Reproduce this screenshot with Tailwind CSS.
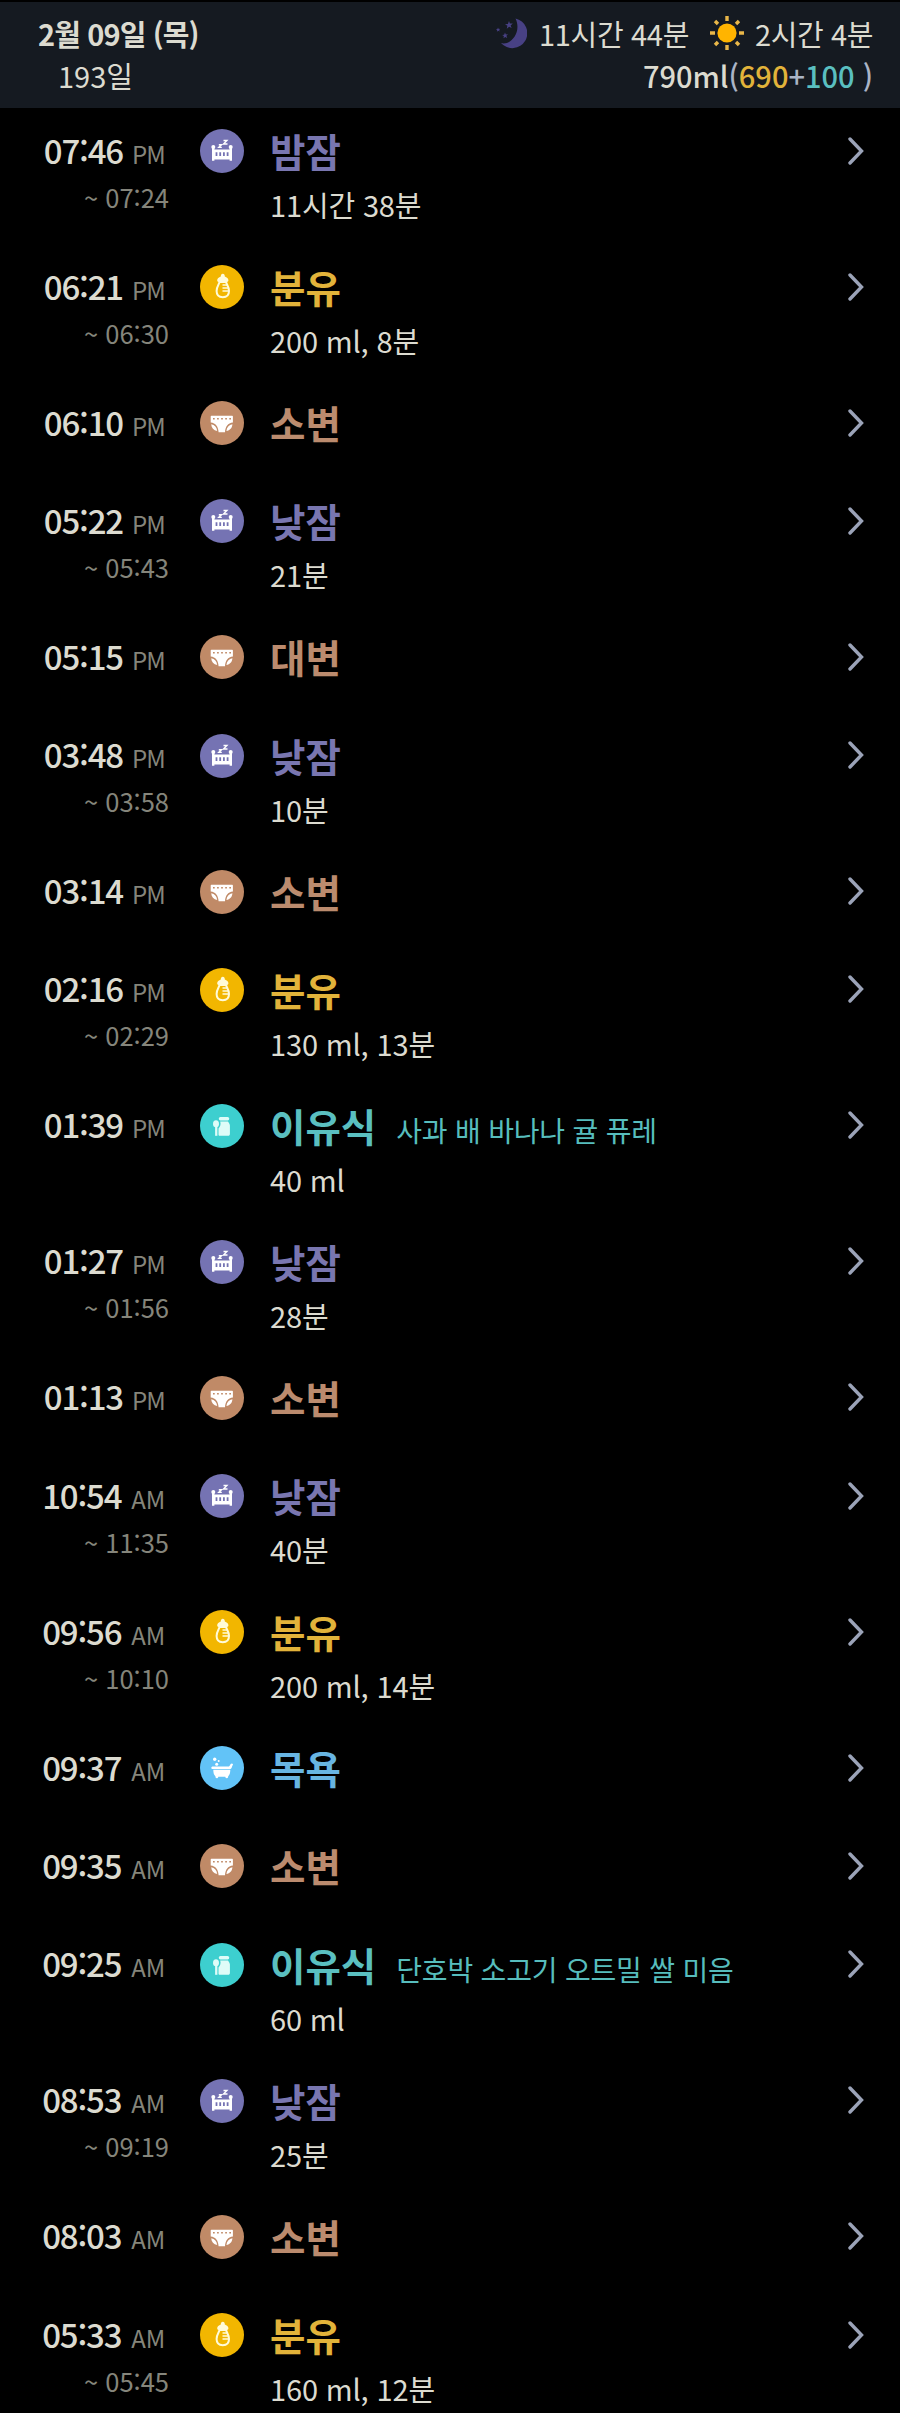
<!DOCTYPE html>
<html lang="ko">
<head>
    <meta charset="UTF-8">
    <meta name="viewport" content="width=device-width, initial-scale=1.0">
    <title>육아 기록</title>
    <script src="https://cdn.jsdelivr.net/npm/@tailwindcss/browser@4"></script>
</head>
<body class="bg-black text-[#dcdbd0] font-['Noto_Sans_CJK_KR',sans-serif] w-[900px] h-[2413px] overflow-hidden">
    <header class="mt-0.5 h-[106px] bg-[#151a21] flex justify-between pt-[10px] pl-[38px] pr-[27px] text-[29px] leading-[42px]">
        <div>
            <div class="font-bold tracking-[-0.9px] whitespace-nowrap">2월 09일 (목)</div>
            <div class="pl-5">193일</div>
        </div>
        <div class="flex flex-col items-end">
            <div class="flex items-center whitespace-nowrap">
                <svg class="w-8 h-8 mr-3" viewBox="0 0 32 32" fill="#484184">
                    <path d="M20.5 1.5A15 15 0 1 1 6 26C16 29 27 15 20.5 1.5Z"/>
                    <path d="M14 4l.9 2.6 2.9-.2-2.2 2 1.1 2.7-2.6-1.3-2.3 1.9.6-2.9-2.4-1.6 2.9-.3zM3 10.500l.7 1.400 1.600-.1-1.200 1.200.6 1.500-1.500-.8-1.300 1.100.3-1.700-1.400-.9 1.600-.2zM10 15.500l.8 2 2.200-.2-1.600 1.500.8 2.100-2-1-1.700 1.400.4-2.200-1.800-1.200 2.100-.2z"/>
                </svg>
                <span class="tracking-[-0.3px]">11시간 44분</span>
                <svg class="w-9 h-9 ml-5 mr-[10px]" viewBox="0 0 36 36">
                    <circle cx="18" cy="18" r="9.600" fill="#ffb400"/>
                    <path d="M18 1v5M18 30v5M1 18h5M30 18h5M6 6l3 3M27 27l3 3M30 6l-3 3M9 27l-3 3" stroke="#e9b749" stroke-width="3.400"/>
                </svg>
                <span class="tracking-[-0.4px]">2시간 4분</span>
            </div>
            <div class="font-medium whitespace-pre">790ml<span class="text-[#aab4c6]">(</span><span class="text-[#e2b33a]">690</span><span class="text-[#aab4c6]">+</span><span class="text-[#5abfc0]">100</span><span class="text-[#aab4c6]"> )</span></div>
        </div>
    </header>

    <main id="log-list"></main>

    <script>
        // Icon artwork, drawn in a 44x44 circle
        const icons = {
            crib: '<g fill="#fff"><circle cx="13.300" cy="18" r="2"/><circle cx="30.700" cy="18" r="2"/><path d="M12 18h2.400v2.500h15.200V18H32v13.700h-2.400V30.500H14.400v1.200H12z"/></g><path d="M16.500 23.300v3.700M20.200 23.300v3.700M23.900 23.300v3.700M27.600 23.300v3.700" stroke="#7573b3" stroke-width="1.800"/><path d="M18.800 15.700h2.700l-2.700 2.700h3M23.500 11.500h3.400l-3.400 3.500h4" fill="none" stroke="#fff" stroke-width="1.400"/>',
            bottle: '<path d="M22.800 8.800c1.300 0 2 1.100 2 2.700 2 .9 3.600 2.200 3.600 3.700 0 1-.6 1.600-1.400 1.800h-8.400c-.8-.2-1.400-.8-1.400-1.800 0-1.500 1.600-2.800 3.600-3.700 0-1.600.7-2.700 2-2.700z" fill="#fffbd8"/><path d="M19.500 17h6.600c.4 2.400 2.900 4.400 2.900 9 0 4.200-1.500 6.200-6.200 6.200s-6.200-2-6.200-6.200c0-4.600 2.500-6.600 2.900-9z" fill="none" stroke="#fffbd8" stroke-width="2"/><path d="M22.500 20h4.500M22.500 23h6M22.500 26h6" stroke="#fffbd8" stroke-width="1.500"/>',
            diaper: '<path d="M10.700 15.500q0-.7.700-.7h20.800q.7 0 .7.700v6c-5 .6-7.600 4-7.900 9.800h-6.400c-.3-5.800-2.900-9.200-7.900-9.800zM11.200 23.300c3.500.6 5.700 3 6 6.800-3.500-.7-5.800-3-6-6.800zM32.400 23.300c-3.500.6-5.700 3-6 6.800 3.500-.7 5.800-3 6-6.800z" fill="#fff"/><path d="M13 17.800h18" stroke="#c08a67" stroke-width="1.600" stroke-dasharray="1.700 2.375"/>',
            jar: '<g fill="#dffcf8"><rect x="18.800" y="13" width="10.400" height="3.400" rx="1.600"/><path d="M20.200 17.400h7.800c.8 1.600 1.900 2.300 1.900 4v8.600c0 1.200-.6 1.800-1.800 1.800h-8.300c-.9 0-1.300-.5-1.300-1.300v-6c1.800-2 2.600-4.600 1.700-7.100z"/><ellipse cx="16" cy="19.700" rx="3" ry="3.500"/><path d="M15.100 22h2.300v9.800h-2.300z"/></g>',
            bath: '<g fill="#fff"><circle cx="14.700" cy="13.300" r="1.700"/><circle cx="18.700" cy="15" r="1"/><circle cx="16.700" cy="18.200" r="1.500"/><path d="M12.300 20.400h16.500c1.300 0 1.100-3 3-3 1 0 1.500.8 1 1.500-.9.700-.6 4.100-3 4.100H12.300q-1-.1-1-1.300t1-1.300zM13.300 23.800h17c0 3-.6 5.200-2.100 6.500l-.2 1.200c-.2 1-2.300 1-2.500 0l-.2-.7h-7l-.2.700c-.2 1-2.300 1-2.500 0l-.2-1.200c-1.500-1.300-2.100-3.500-2.100-6.500z"/></g>'
        };

        const kinds = {
            sleep: { icon: 'crib', circle: 'bg-[#7573b3]', title: 'text-[#7976b0]' },
            milk: { icon: 'bottle', circle: 'bg-[#f2b600]', title: 'text-[#e2b33a]' },
            diaper: { icon: 'diaper', circle: 'bg-[#c08a67]', title: 'text-[#bb8b6e]' },
            food: { icon: 'jar', circle: 'bg-[#3dcfcf]', title: 'text-[#5abfc0]' },
            bath: { icon: 'bath', circle: 'bg-[#62c3f7]', title: 'text-[#68b5e2]' }
        };

        // kind, start, am/pm, end, title, detail, note
        const logs = [
            ['sleep', '07:46', 'PM', '07:24', '밤잠', '11시간 38분', ''],
            ['milk', '06:21', 'PM', '06:30', '분유', '200 ml, 8분', ''],
            ['diaper', '06:10', 'PM', '', '소변', '', ''],
            ['sleep', '05:22', 'PM', '05:43', '낮잠', '21분', ''],
            ['diaper', '05:15', 'PM', '', '대변', '', ''],
            ['sleep', '03:48', 'PM', '03:58', '낮잠', '10분', ''],
            ['diaper', '03:14', 'PM', '', '소변', '', ''],
            ['milk', '02:16', 'PM', '02:29', '분유', '130 ml, 13분', ''],
            ['food', '01:39', 'PM', '', '이유식', '40 ml', '사과 배 바나나 귤 퓨레'],
            ['sleep', '01:27', 'PM', '01:56', '낮잠', '28분', ''],
            ['diaper', '01:13', 'PM', '', '소변', '', ''],
            ['sleep', '10:54', 'AM', '11:35', '낮잠', '40분', ''],
            ['milk', '09:56', 'AM', '10:10', '분유', '200 ml, 14분', ''],
            ['bath', '09:37', 'AM', '', '목욕', '', ''],
            ['diaper', '09:35', 'AM', '', '소변', '', ''],
            ['food', '09:25', 'AM', '', '이유식', '60 ml', '단호박 소고기 오트밀 쌀 미음'],
            ['sleep', '08:53', 'AM', '09:19', '낮잠', '25분', ''],
            ['diaper', '08:03', 'AM', '', '소변', '', ''],
            ['milk', '05:33', 'AM', '05:45', '분유', '160 ml, 12분', '']
        ];

        document.getElementById('log-list').innerHTML = logs.map(([kind, start, half, end, title, detail, note]) => {
            const k = kinds[kind];
            return `
            <div class="flex items-start whitespace-nowrap ${detail ? 'h-[136px]' : 'h-[98.300px]'}">
                <div class="w-[169px] pt-[19.500px] flex flex-col items-end">
                    <div class="flex items-baseline pr-1 h-11 leading-[44px] ${half === 'AM' ? 'gap-2.5' : 'gap-[9px]'}">
                        <span class="text-[33px] font-medium tracking-[-1.200px]">${start}</span>
                        <span class="text-[24px] text-[#85857b] ${half === 'AM' ? 'tracking-[-0.200px]' : 'tracking-[-0.800px]'}">${half}</span>
                    </div>
                    ${end ? `<div class="mt-[9px] text-[25.500px] leading-8 text-[#85857b]">~ ${end}</div>` : ''}
                </div>
                <div class="ml-[31px] mt-[21px] size-11 rounded-full ${k.circle}">
                    <svg class="size-11" viewBox="0 0 44 44">${icons[k.icon]}</svg>
                </div>
                <div class="ml-[26px] pt-[18px] flex-1">
                    <div class="flex items-baseline gap-5 h-12 leading-[48px]">
                        <span class="text-[38.500px] font-bold ${k.title}">${title}</span>
                        ${note ? `<span class="text-[28px] tracking-[-0.200px] text-[#57bdbd]">${note}</span>` : ''}
                    </div>
                    ${detail ? `<div class="mt-3 text-[29px] tracking-[-0.150px] leading-9">${detail}</div>` : ''}
                </div>
                <svg class="w-4 h-7 mt-[28.500px] mr-9" viewBox="0 0 16 28" fill="none" stroke="#9ba3b8" stroke-width="3.400">
                    <path d="M2 2l11.500 12L2 26" stroke-linecap="round"/>
                </svg>
            </div>`;
        }).join('');
    </script>
</body>
</html>
